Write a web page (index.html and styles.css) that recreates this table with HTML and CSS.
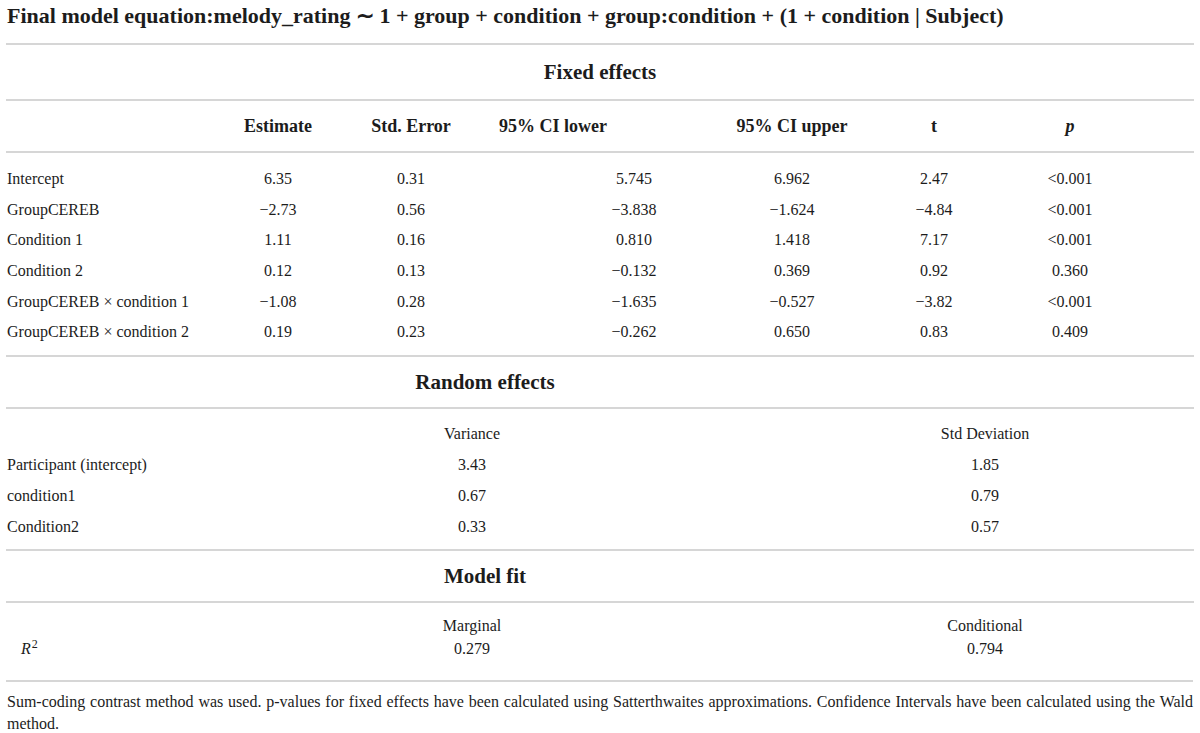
FILE: index.html
```html
<!DOCTYPE html>
<html lang="en">
<head>
<meta charset="utf-8">
<title>Final model equation</title>
<link rel="stylesheet" href="styles.css">
</head>
<body>
<div class="doc">
  <h1 class="title">Final model equation:melody_rating ∼ 1 + group + condition + group:condition + (1 + condition | Subject)</h1>

  <section class="block">
    <div class="section-head fixed-head">Fixed effects</div>
    <div class="fx-row fx-head">
      <div class="cell lab"></div>
      <div class="cell c-est">Estimate</div>
      <div class="cell c-se">Std. Error</div>
      <div class="cell c-cil h-cil">95% CI lower</div>
      <div class="cell c-ciu">95% CI upper</div>
      <div class="cell c-t">t</div>
      <div class="cell c-p"><i>p</i></div>
    </div>
    <div class="fx-body">
      <div class="fx-row">
        <div class="cell lab">Intercept</div>
        <div class="cell c-est">6.35</div>
        <div class="cell c-se">0.31</div>
        <div class="cell c-cil v-cil">5.745</div>
        <div class="cell c-ciu">6.962</div>
        <div class="cell c-t">2.47</div>
        <div class="cell c-p">&lt;0.001</div>
      </div>
      <div class="fx-row">
        <div class="cell lab">GroupCEREB</div>
        <div class="cell c-est">−2.73</div>
        <div class="cell c-se">0.56</div>
        <div class="cell c-cil v-cil">−3.838</div>
        <div class="cell c-ciu">−1.624</div>
        <div class="cell c-t">−4.84</div>
        <div class="cell c-p">&lt;0.001</div>
      </div>
      <div class="fx-row">
        <div class="cell lab">Condition 1</div>
        <div class="cell c-est">1.11</div>
        <div class="cell c-se">0.16</div>
        <div class="cell c-cil v-cil">0.810</div>
        <div class="cell c-ciu">1.418</div>
        <div class="cell c-t">7.17</div>
        <div class="cell c-p">&lt;0.001</div>
      </div>
      <div class="fx-row">
        <div class="cell lab">Condition 2</div>
        <div class="cell c-est">0.12</div>
        <div class="cell c-se">0.13</div>
        <div class="cell c-cil v-cil">−0.132</div>
        <div class="cell c-ciu">0.369</div>
        <div class="cell c-t">0.92</div>
        <div class="cell c-p">0.360</div>
      </div>
      <div class="fx-row">
        <div class="cell lab">GroupCEREB × condition 1</div>
        <div class="cell c-est">−1.08</div>
        <div class="cell c-se">0.28</div>
        <div class="cell c-cil v-cil">−1.635</div>
        <div class="cell c-ciu">−0.527</div>
        <div class="cell c-t">−3.82</div>
        <div class="cell c-p">&lt;0.001</div>
      </div>
      <div class="fx-row">
        <div class="cell lab">GroupCEREB × condition 2</div>
        <div class="cell c-est">0.19</div>
        <div class="cell c-se">0.23</div>
        <div class="cell c-cil v-cil">−0.262</div>
        <div class="cell c-ciu">0.650</div>
        <div class="cell c-t">0.83</div>
        <div class="cell c-p">0.409</div>
      </div>
    </div>
  </section>

  <section class="block">
    <div class="two-row sub-head">
      <div class="cell lab"></div>
      <div class="cell c-a">Random effects</div>
    </div>
    <div class="two-body">
      <div class="two-row">
        <div class="cell lab"></div>
        <div class="cell c-a">Variance</div>
        <div class="cell c-b">Std Deviation</div>
      </div>
      <div class="two-row">
        <div class="cell lab">Participant (intercept)</div>
        <div class="cell c-a">3.43</div>
        <div class="cell c-b">1.85</div>
      </div>
      <div class="two-row">
        <div class="cell lab">condition1</div>
        <div class="cell c-a">0.67</div>
        <div class="cell c-b">0.79</div>
      </div>
      <div class="two-row">
        <div class="cell lab">Condition2</div>
        <div class="cell c-a">0.33</div>
        <div class="cell c-b">0.57</div>
      </div>
    </div>
  </section>

  <section class="block">
    <div class="two-row sub-head">
      <div class="cell lab"></div>
      <div class="cell c-a">Model fit</div>
    </div>
    <div class="fit-body">
      <div class="two-row fit-row">
        <div class="cell lab"></div>
        <div class="cell c-a">Marginal</div>
        <div class="cell c-b">Conditional</div>
      </div>
      <div class="two-row fit-row">
        <div class="cell lab r2"><i>R</i><sup>2</sup></div>
        <div class="cell c-a">0.279</div>
        <div class="cell c-b">0.794</div>
      </div>
    </div>
  </section>

  <p class="note">Sum-coding contrast method was used. p-values for fixed effects have been calculated using Satterthwaites approximations. Confidence Intervals have been calculated using the Wald method.</p>
</div>
</body>
</html>
```

FILE: styles.css
```css
html, body {
  margin: 0;
  padding: 0;
  background: #ffffff;
}

body {
  font-family: "Liberation Serif", "Times New Roman", serif;
  color: #1c1c1c;
}

.doc {
  width: 1200px;
}

.title {
  margin: 0;
  padding: 3px 0 0 7px;
  height: 43px;
  box-sizing: border-box;
  font-size: 22px;
  line-height: 26px;
  font-weight: bold;
  white-space: nowrap;
}

.block {
  border-top: 2px solid #d6d6d6;
  margin: 0 6px;
}

.section-head {
  height: 54px;
  display: flex;
  align-items: center;
  justify-content: center;
  font-size: 21px;
  font-weight: bold;
  border-bottom: 2px solid #d6d6d6;
}

.cell {
  font-size: 16px;
  line-height: 20px;
  text-align: center;
  white-space: nowrap;
}

.cell.lab {
  text-align: left;
  padding-left: 1px;
}

/* fixed effects grid: columns measured from the block's left edge (x = 6) */
.fx-row {
  display: grid;
  grid-template-columns: 208px 128px 138px 232px 160px 124px 148px;
  align-items: center;
}

.fx-head {
  height: 50px;
  border-bottom: 2px solid #d6d6d6;
}

.fx-head .cell {
  font-size: 18px;
  font-weight: bold;
}

.fx-head .h-cil {
  padding-right: 86px;
}

.v-cil {
  padding-left: 76px;
}

.fx-body {
  padding: 11px 0 7px;
}

.fx-body .fx-row {
  height: 30.6px;
}

/* random effects / model fit grid */
.two-row {
  display: grid;
  grid-template-columns: 168px 596px 430px;
  align-items: center;
}

.sub-head {
  height: 50px;
  border-bottom: 2px solid #d6d6d6;
}

.sub-head .cell {
  font-size: 21px;
  font-weight: bold;
  padding-left: 26px;
}

.two-body {
  padding: 10px 0 6px;
}

.two-body .two-row {
  height: 31px;
}

.fit-body {
  padding: 12px 0 19px;
}

.fit-body .fit-row {
  height: 23px;
}

.r2 {
  padding-left: 15px !important;
}

.r2 sup {
  font-size: 12px;
  vertical-align: 6px;
  line-height: 0;
  margin-left: 1px;
}

.note {
  margin: 0 7px 0 6px;
  border-top: 2px solid #d6d6d6;
  padding: 9px 0 0 1px;
  font-size: 16px;
  line-height: 22px;
  text-align: justify;
}
```
